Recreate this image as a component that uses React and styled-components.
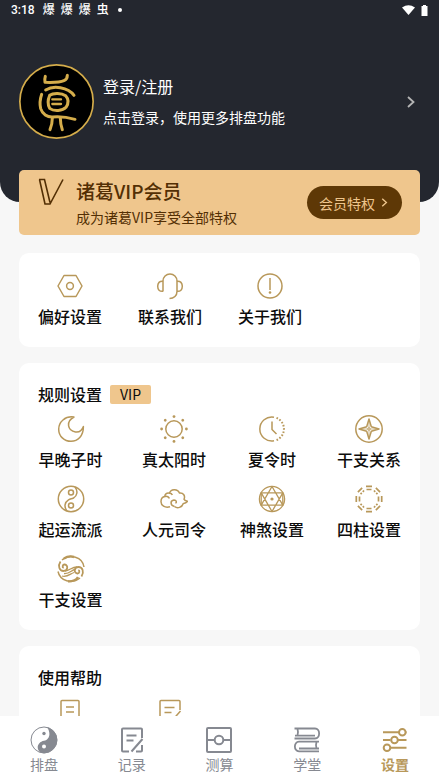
import React from 'react';
import styled, { createGlobalStyle } from 'styled-components';

const GOLD = '#b8985a';
const GREY = '#868991';

const GlobalStyle = createGlobalStyle`
  * { box-sizing: border-box; }
  body {
    margin: 0;
    background: #f7f7f7;
    font-family: "Noto Sans CJK SC", "Noto Sans", sans-serif;
    color: #0c0c0c;
  }
  button { font: inherit; color: inherit; border: 0; padding: 0; background: none; cursor: pointer; }
  a { color: inherit; text-decoration: none; }
  h2, p { margin: 0; }
  svg { display: block; flex: none; }
`;

const Screen = styled.div`
  height: 100vh;
  display: flex;
  flex-direction: column;
`;
const Content = styled.main`
  flex: 1;
  min-height: 0;
  overflow: hidden;
`;
const Header = styled.header`
  background: #24272f;
  color: #fff;
  border-radius: 0 0 20px 20px;
  padding-bottom: 63px;
`;
const StatusBar = styled.div`
  height: 20px;
  display: flex;
  align-items: center;
  justify-content: space-between;
  padding: 0 11px;
  font: 500 12px/20px Roboto, "Noto Sans CJK SC", sans-serif;
`;
const StatusGroup = styled.div`
  display: flex;
  align-items: center;
  gap: 6px;
`;
const Notices = styled.span`
  display: flex;
  gap: 6px;
  margin: 0 3px 0 2px;
`;
const Dot = styled.i`
  width: 4px;
  height: 4px;
  border-radius: 50%;
  background: #fff;
`;
const Profile = styled.button`
  width: 100%;
  margin-top: 44px;
  padding: 0 24px 0 19px;
  display: flex;
  align-items: center;
  text-align: left;
`;
const ProfileText = styled.span`
  flex: 1;
  display: flex;
  flex-direction: column;
  gap: 7px;
  margin: 0 9px;
`;
const ProfileName = styled.span`
  font-size: 16px;
  line-height: 24px;
`;
const ProfileHint = styled.span`
  font-size: 14px;
  line-height: 24px;
`;

const VipBanner = styled.section`
  margin: -32px 19px 18px;
  height: 65px;
  padding: 0 18px 0 19px;
  display: flex;
  align-items: center;
  background: #efc68d;
  border-radius: 5px;
  color: #532f04;
`;
const VipMark = styled.div`
  align-self: flex-start;
  padding-top: 8px;
  width: 38px;
`;
const VipText = styled.div`
  flex: 1;
`;
const VipTitle = styled.h2`
  font-size: 19px;
  font-weight: 500;
  line-height: 28px;
`;
const VipHint = styled.p`
  font-size: 14px;
  line-height: 24px;
`;
const VipButton = styled.button`
  && { background: #5e3806; color: #efc68d; padding: 0 14px 0 12px; }
  height: 33px;
  border-radius: 17px;
  display: flex;
  align-items: center;
  gap: 6px;
  font-size: 14px;
  line-height: 32px;
`;

const Card = styled.section`
  margin: 0 19px 16px;
  background: #fff;
  border-radius: 10px;
  padding: 19px 0;
`;
const CardHead = styled.div`
  display: flex;
  align-items: center;
  gap: 8px;
  padding-left: 19px;
  margin-bottom: 9px;
`;
const CardTitle = styled.h2`
  font-size: 16px;
  font-weight: 500;
  line-height: 24px;
`;
const Badge = styled.span`
  background: #efc68d;
  border-radius: 2px;
  padding: 0 10px;
  font-size: 14px;
  line-height: 19px;
`;
const ItemRow = styled.div`
  display: flex;
  gap: 36px;
  padding-left: 19px;
`;
const ItemGrid = styled.div`
  display: grid;
  grid-template-columns: 103fr 104fr 92fr 102fr;
  row-gap: 14px;
`;
const Item = styled.button`
  display: flex;
  flex-direction: column;
  align-items: center;
  gap: 4px;
  min-width: 64px;
  font-size: 16px;
  font-weight: 500;
  line-height: 24px;
`;

const TabBar = styled.nav`
  height: 66px;
  display: flex;
  background: #fff;
`;
const Tab = styled.a`
  flex: 1;
  display: flex;
  flex-direction: column;
  align-items: center;
  padding-top: 10px;
  font-size: 14px;
  line-height: 21px;
  && { color: ${(p) => (p.$active ? GOLD : GREY)}; }
  font-weight: ${(p) => (p.$active ? 700 : 400)};
`;

const Icon = ({ children, color = GOLD, width = 1.5 }) => (
  <svg width="28" height="28" viewBox="0 0 28 28" fill="none" stroke={color}
    strokeWidth={width} strokeLinejoin="round" aria-hidden="true">{children}</svg>
);
const Chevron = ({ width, height, stroke }) => (
  <svg width={width} height={height} viewBox="0 0 8 12" fill="none" stroke={stroke} strokeWidth="1.8" aria-hidden="true">
    <path d="M1 1l5.5 5L1 11" />
  </svg>
);
const turns = [0, 45, 90, 135, 180, 225, 270, 315];

const Preferences = () => (
  <Icon><path d="M2 14L8 3.5h12L26 14l-6 10.5H8z" /><circle cx="14" cy="14" r="3.4" /></Icon>
);
const Headset = () => (
  <Icon>
    <path d="M7 19.5V9a7 7 0 0 1 14 0v10.5c0 4-3 7-7.5 7" />
    <path d="M7 9.2C3.5 8.8 1.7 11 1.7 14.3S3.5 19.7 7 19.3M21 9.2c3.5-.4 5.3 1.8 5.3 5.1s-1.8 5.4-5.3 5" />
  </Icon>
);
const About = () => (
  <Icon><circle cx="14" cy="14" r="12" /><path d="M14 6v12" /><circle cx="14" cy="20.5" r="1.3" fill={GOLD} stroke="none" /></Icon>
);
const Moon = () => (
  <Icon><path d="M17 2C8 .8 1.7 7 1.7 14.2c0 7 5.5 12.1 12.3 12.1S26.5 21 26.4 11.5C25 15.5 22 17.5 18.500 17 10.500 15.500 8.500 6.500 17 2z" /></Icon>
);
const Sun = () => (
  <Icon>
    <circle cx="14" cy="14" r="8.2" />
    {turns.map((a) => <circle key={a} cx="14" cy="1.6" r="1.4" fill={GOLD} stroke="none" transform={`rotate(${a} 14 14)`} />)}
  </Icon>
);
const Clock = () => (
  <Icon>
    <path d="M16 2.2A12 12 0 1 0 16 25.8" />
    <path d="M18.5 2.9A12 12 0 0 1 18.5 25.1" strokeDasharray="1.6 1.7" strokeWidth="2" />
    <path d="M14 6.5v8l4.5 4.5" />
  </Icon>
);
const Compass = () => (
  <Icon>
    <circle cx="14" cy="14" r="13.2" />
    <path d="M14 4l2.3 7.7L24 14l-7.7 2.3L14 24l-2.3-7.7L4 14l7.7-2.3z" />
    <path d="M14 6v16M6 14h16" strokeWidth=".7" />
    <circle cx="14" cy="14" r="1.2" fill="#fff" strokeWidth="1" />
  </Icon>
);
const TaijiLine = () => (
  <Icon>
    <circle cx="14" cy="14" r="12.7" />
    <path d="M18 2c3.2 4 2.2 9-1.5 11-2 1-3 .6-5 1.800C7.500 17.200 6.800 22 10 26" />
    <circle cx="14" cy="7.5" r="2.5" /><circle cx="14" cy="20.5" r="2.5" />
  </Icon>
);
const Cloud = () => (
  <Icon>
    <path d="M14.500 21.500C17.500 23.800 22 22.500 23.300 18.400c1.700.1 3.200-.6 4.300-2.100-1.600-.3-3.100-.5-3.600-2C25.500 11 23.500 7.500 19.400 8 17.500 3.200 10.500 4 9.500 8.200 6.500 7.500 4.500 9.500 5 11.500 3 11.700 1 13.500 1 16.500.8 20.500 5 23.300 10 21.800" />
    <path d="M14.500 21.500c-4.500-1-4.500-6-.5-6.500 2.500 0 3 2.500 1.500 3.200M5 11.500c2-.5 4 .5 4.300 2M9.500 8.200c1.500 0 2.500.8 2.800 1.800" />
  </Icon>
);
const Hexagram = () => (
  <Icon width={1.3}>
    <circle cx="14" cy="14" r="12.6" />
    <path d="M14 1.500l10.800 18.700H3.200zM14 26.500L3.200 7.800h21.600z" />
    <path d="M3.200 7.800v12.400M24.800 7.800v12.400" />
    <circle cx="14" cy="14" r="1.6" fill={GOLD} stroke="none" />
  </Icon>
);
const Bagua = () => (
  <Icon width={1.7}>
    {turns.map((a, i) => (
      <path key={a} transform={`rotate(${a} 14 14)`}
        d={i % 2 ? 'M11 1.3h6M11.500 4.500h1.800M14.700 4.500h1.800' : 'M11 1.300h6M11.500 4.500h5'} />
    ))}
  </Icon>
);
const Waves = () => (
  <Icon width={1.8}>
    <path d="M5 5C13-1.500 25.500 2 27 12M23 23C15 29.500 3 26 1 16.500" strokeWidth="1.500" />
    <path d="M3.500 6.500c-3 4.500-1 9.500 3 9.500 4.500 0 5-6 1.200-6.500-2.200-.2-2.800 2.800-1 3.300" />
    <path d="M24.500 21.500c3-4.500 1-9.500-3-9.500-4.500 0-5 6-1.200 6.500 2.200.2 2.800-2.800 1-3.300" />
    <path d="M8 16c5-.5 6.500-4 12-4M7 18.500c6 .5 7.500-3.800 11-4M5 21c5 1.500 8-2 12-3.500" strokeWidth="1.300" />
    <path d="M11 26.300c4 .2 8-1 10-4.300M7 3.500c3-2 7-2.500 10-1.500" strokeWidth="2.400" />
  </Icon>
);
const Guide = () => (
  <Icon><rect x="5" y="2.5" width="18" height="23" rx="1" /><path d="M10 9h8M10 14h8M10 19h8" /></Icon>
);
const Note = ({ color = GOLD, width = 1.5 }) => (
  <Icon color={color} width={width}>
    <path d="M24 12V3.5a1 1 0 0 0-1-1H5a1 1 0 0 0-1 1v21a1 1 0 0 0 1 1h6M24 19v5.500a1 1 0 0 1-1 1h-5" />
    <path d="M8.500 9.500h10M8.500 14.500h7M24.500 13L13.500 25.500" />
  </Icon>
);
const TaijiSolid = () => (
  <Icon color={GREY} width={1}>
    <circle cx="14" cy="14" r="13" />
    <path d="M17 1.3C28 4 30 16.500 23.500 23 19 27.500 13.500 28 10 26.300 5.500 22 8 15.800 14 14.700c6-1.200 7-8.200 3-13.400z" fill={GREY} stroke="none" />
    <circle cx="14" cy="7.5" r="1.7" fill={GREY} stroke="none" />
    <circle cx="14" cy="20.5" r="2" fill="#fff" stroke="none" />
  </Icon>
);
const Divine = () => (
  <Icon color={GREY} width={2}>
    <rect x="2" y="2" width="24" height="24" rx="1" /><circle cx="14" cy="14" r="4.3" /><path d="M2 14h7.700M18.300 14H26" />
  </Icon>
);
const Books = () => (
  <Icon color={GREY} width={1.8}>
    <path d="M1.500 2.500h20.500c5.500 0 5.500 10 0 10H1.500M4.500 3c.8 2.500.8 4.500 0 6.500M2 9.700h20" />
    <path d="M26 15.700H6c-5.500 0-5.500 9.600 0 9.600h20M23.500 16c-.8 2.500-.8 4.500 0 6.500M26 22.500H6" />
  </Icon>
);
const Sliders = () => (
  <Icon width={2}>
    <path d="M2 6.200h16M24 6.200h1.500M2 14h7.500M17 14h8.500M10 21.700h15.500" />
    <circle cx="21.300" cy="6.200" r="3.300" /><circle cx="13.500" cy="14" r="3.300" /><circle cx="6" cy="21.700" r="3.300" />
  </Icon>
);
const Avatar = () => (
  <svg width="75" height="75" viewBox="56 190 225 225" fill="none" stroke="#d5ad4b" strokeLinecap="round" strokeLinejoin="round" aria-hidden="true">
    <circle cx="168.500" cy="302.500" r="110" fill="#000" strokeWidth="5" />
    <g strokeWidth="9">
      <path d="M135 227c-2 6-2 12-1 18 27 1 46 0 57-5 8-3 10-9 10-16" />
      <path d="M136 268c11-7 28-10 44-7 17 3 32 10 41 23" />
      <path d="M124 281c-5 15-6 31-3 43 5 16 20 26 36 25 24-2 45 1 67 7" />
      <path d="M148 284c-6 14-6 28 0 39 13 10 39 8 49-3 8-12 8-25-1-35-12-8-37-9-48-1z" />
      <path d="M156 296h26M156 310h26" strokeWidth="7" />
      <path d="M156 352q0 18-7 35M180 352q0 18 6 35" />
    </g>
  </svg>
);

const rules = [
  ['早晚子时', Moon], ['真太阳时', Sun], ['夏令时', Clock], ['干支关系', Compass],
  ['起运流派', TaijiLine], ['人元司令', Cloud], ['神煞设置', Hexagram], ['四柱设置', Bagua],
  ['干支设置', Waves],
];
const general = [['偏好设置', Preferences], ['联系我们', Headset], ['关于我们', About]];
const tabs = [
  ['排盘', <TaijiSolid />], ['记录', <Note color={GREY} width={2} />], ['测算', <Divine />],
  ['学堂', <Books />], ['设置', <Sliders />],
];
const renderItems = (list) => list.map(([label, Glyph]) => (
  <Item key={label} type="button"><Glyph />{label}</Item>
));

export default function App() {
  return (
    <Screen>
      <GlobalStyle />
      <Content>
        <Header>
          <StatusBar>
            <StatusGroup>
              <span>3:18</span>
              <Notices><span>爆</span><span>爆</span><span>爆</span><span>虫</span></Notices>
              <Dot />
            </StatusGroup>
            <StatusGroup>
              <svg width="13" height="10" viewBox="0 0 13 10" fill="#fff" aria-hidden="true"><path d="M0 2.500Q6.500-2 13 2.500L6.500 10z" /></svg>
              <svg width="7" height="11" viewBox="0 0 7 11" fill="#fff" aria-hidden="true"><path d="M2 0h3v1h1.500v10h-6V1H2z" /></svg>
            </StatusGroup>
          </StatusBar>
          <Profile type="button">
            <Avatar />
            <ProfileText>
              <ProfileName>登录/注册</ProfileName>
              <ProfileHint>点击登录，使用更多排盘功能</ProfileHint>
            </ProfileText>
            <Chevron width={8} height={12} stroke="#b5b5b5" />
          </Profile>
        </Header>
        <VipBanner>
          <VipMark>
            <svg width="27" height="28" viewBox="0 0 27 28" fill="none" stroke="#532f04" strokeWidth="1.6" aria-hidden="true">
              <path d="M1 1.500h5.500l5.500 23M1.500 1.500L7 26h5L25 1.500" />
            </svg>
          </VipMark>
          <VipText>
            <VipTitle>诸葛VIP会员</VipTitle>
            <VipHint>成为诸葛VIP享受全部特权</VipHint>
          </VipText>
          <VipButton type="button">会员特权<Chevron width={7} height={9} stroke="#efc68d" /></VipButton>
        </VipBanner>
        <Card>
          <ItemRow>{renderItems(general)}</ItemRow>
        </Card>
        <Card>
          <CardHead><CardTitle>规则设置</CardTitle><Badge>VIP</Badge></CardHead>
          <ItemGrid>{renderItems(rules)}</ItemGrid>
        </Card>
        <Card>
          <CardHead><CardTitle>使用帮助</CardTitle></CardHead>
          <ItemRow>
            <Item type="button" aria-label="使用指南"><Guide /></Item>
            <Item type="button" aria-label="意见反馈"><Note /></Item>
          </ItemRow>
        </Card>
      </Content>
      <TabBar>
        {tabs.map(([label, icon], i) => (
          <Tab key={label} href="#" $active={i === 4} aria-current={i === 4 ? 'page' : undefined}>{icon}{label}</Tab>
        ))}
      </TabBar>
    </Screen>
  );
}
